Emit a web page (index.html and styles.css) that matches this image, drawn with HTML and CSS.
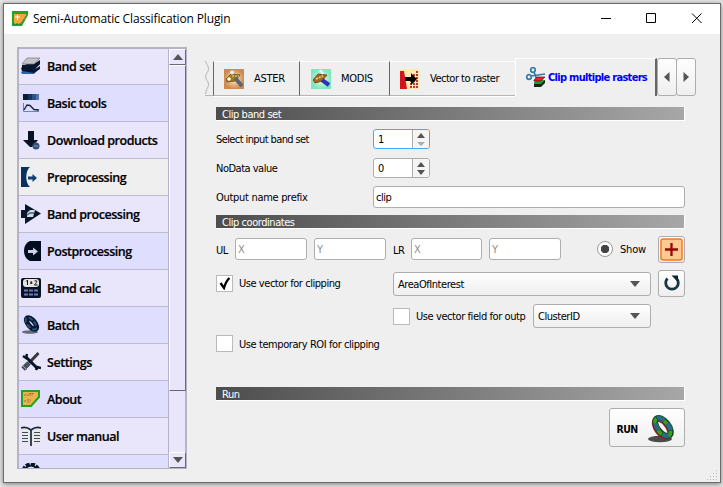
FILE: index.html
```html
<!DOCTYPE html>
<html lang="en">
<head>
<meta charset="utf-8">
<title>Semi-Automatic Classification Plugin</title>
<link rel="stylesheet" href="styles.css">
</head>
<body>
<div class="window">
  <header class="titlebar">
    <svg class="app-icon" width="16" height="16" viewBox="0 0 16 16"><path fill="#25a42b" d="M0 0h16v4l-6 11H0z"/><path fill="#f4a63c" d="M2 3h12v3l-5 7H2z"/><path d="M3 6h5M5.500 4v5" stroke="#fff"/><path d="M1 13h8l5-8" fill="none" stroke="#176c43" stroke-dasharray="2 1"/></svg>
    <h1 class="title">Semi-Automatic Classification Plugin</h1>
    <svg class="winbtns" width="102" height="12" viewBox="0 0 102 12" fill="none" stroke="#000"><path d="M0 5.500h10"/><path d="M45.500.5h9v9h-9z"/><path d="M91 .5l9.500 9.500M100.500.5L91 10"/></svg>
  </header>
  <div class="body">
    <nav class="sidebar">
      <ul class="menu">
        <li class="item"><svg width="20" height="20" viewBox="0 0 20 20"><path fill="#2d61a8" d="M0 15l6-4 13 0-6 6H1z"/><path fill="#08172e" d="M0 11l6-4h13l-6 6-12 1zM1 14l12-1 6-4v3l-6 4z"/><path fill="#08172e" d="M1 8l12-1 6-4v4l-6 5H1z"/><path fill="#c3c4c8" stroke="#777" stroke-width=".7" d="M6 1h13l-6 6H1z"/></svg><span>Band set</span></li>
        <li class="item alt"><svg width="20" height="20" viewBox="0 0 20 20"><path fill="#0c1d38" d="M2 1h5v6H2z"/><path fill="#17365e" d="M7 1h4v6H7z"/><path fill="#2b528b" d="M11 1h4v6h-4z"/><path fill="#5077b3" d="M15 1h3v6h-3z"/><path d="M2.500 10v8.500H18" fill="none" stroke="#75849a"/><path d="M3 17l3-5 3 .5 4 4 5 .5" fill="none" stroke="#17243a" stroke-width="1.400"/></svg><span>Basic tools</span></li>
        <li class="item"><svg width="20" height="20" viewBox="0 0 20 20"><path fill="#071225" d="M7 1h6v9h4l-6 7h-2L2 10h5z"/><circle cx="15" cy="16" r="3.500" fill="#31527f"/><path d="M13 16h4" stroke="#8398b5"/></svg><span>Download products</span></li>
        <li class="item current"><svg width="20" height="20" viewBox="0 0 20 20"><path fill="#08315b" d="M0 0h9C4 4 4 16 9 20H0z"/><path fill="#143f6f" d="M7 9.500h4.500V7l4.500 4-4.500 4v-2.500H7z"/></svg><span>Preprocessing</span></li>
        <li class="item"><svg width="20" height="20" viewBox="0 0 20 20"><path fill="#07162b" d="M0 6h4V0l16 9.500L4 20v-6H0z"/><path fill="#d4dae4" d="M6 9l3-3h5l-2 7H6z"/><path d="M6 11l3-2 4 0" fill="none" stroke="#426185" stroke-width="1.500"/></svg><span>Band processing</span></li>
        <li class="item alt"><svg width="20" height="20" viewBox="0 0 20 20"><path fill="#020e20" d="M20 0H9C1 3 1 17 9 20h11z"/><path fill="#ccd1e7" d="M7 9h5V6.500l5 4-5 4V12H7z"/></svg><span>Postprocessing</span></li>
        <li class="item"><svg width="20" height="20" viewBox="0 0 20 20"><rect width="20" height="20" rx="2" fill="#061325"/><rect x="2" y="1" width="16" height="8" rx="3" fill="#e6e4e1"/><path d="M5 3.500L6.500 2v5M9 5h2.500M10.200 3v3M13.500 3c3-1 3 .7 0 4h3" fill="none" stroke="#111"/><path d="M3 12.500h14M3 16.500h14" stroke="#7778bc" stroke-width="2" stroke-dasharray="4 1"/></svg><span>Band calc</span></li>
        <li class="item alt"><svg width="20" height="20" viewBox="0 0 20 20"><ellipse cx="9" cy="17" rx="8" ry="1.800" fill="#68697b"/><ellipse cx="10.500" cy="8.500" rx="3.200" ry="7" transform="rotate(-40 10.500 8.500)" fill="none" stroke="#071526" stroke-width="5"/><ellipse cx="10" cy="8.500" rx="3.500" ry="7.200" transform="rotate(-40 10 8.500)" fill="none" stroke="#24508b" stroke-width="2" stroke-dasharray="5 2"/></svg><span>Batch</span></li>
        <li class="item"><svg width="20" height="20" viewBox="0 0 20 20"><path d="M17.500 1L8 11" stroke="#3a3738" stroke-width="3"/><path d="M8 11l-6 6" stroke="#46505f" stroke-width="5"/><path d="M2 14l4 4" stroke="#a3a5b2"/><path d="M5 5l12 12" stroke="#06172b" stroke-width="3"/><path d="M2 4l3 2 1-4M15 18l1-3 4 1" fill="none" stroke="#06172b" stroke-width="2.500"/></svg><span>Settings</span></li>
        <li class="item alt"><svg width="20" height="20" viewBox="0 0 20 20"><path fill="#eab34b" stroke="#21a31e" stroke-width="2" d="M1 2h17v6l-8 9H1z"/><path d="M3 6h4M8 4.500h5M3 12h2M6 11h4" stroke="#957039" stroke-dasharray="2 .7"/><path d="M7 6h5M6 13h3" stroke="#bc8435"/></svg><span>About</span></li>
        <li class="item"><svg width="20" height="20" viewBox="0 0 20 20"><path fill="#e9e8e9" d="M0 3h20v14H0z"/><path d="M10 20V4M10 4Q5 0 0 2M10 4q5-4 10-2" fill="none" stroke="#172838" stroke-width="1.700"/><path d="M1 6.500h6M1 9.500h6M1 12.500h6M1 15.500h6M13 6.500h6M13 9.500h6M13 12.500h6M13 15.500h6" stroke="#3e4b58"/></svg><span>User manual</span></li>
        <li class="item alt"><svg width="20" height="20" viewBox="0 0 20 20"><circle cx="10" cy="9" r="7.800" fill="none" stroke="#071525" stroke-width="3.600" stroke-dasharray="4 1.200"/><circle cx="10" cy="9" r="6.500" fill="none" stroke="#071525" stroke-width="2"/></svg></li>
      </ul>
      <div class="scroll">
        <div class="sbtn"><svg width="10" height="6"><path d="M0 6l5-6 5 6z" fill="#555"/></svg></div>
        <div class="thumb"></div>
        <div class="track"></div>
        <div class="sbtn"><svg width="10" height="6"><path d="M0 0l5 6 5-6z" fill="#555"/></svg></div>
      </div>
    </nav>
    <main class="main">
      <div class="tabs">
        <svg class="torn" width="8" height="35" viewBox="0 0 8 35"><path d="M.5 0C.5 3 3.500 4 3.500 8S.5 12 .5 16s3 4 3 8-3 5-3 10" fill="none" stroke="#b3b3b3"/></svg>
        <div class="tab aster"><svg width="20" height="20" viewBox="0 0 20 20"><defs><radialGradient id="warm"><stop stop-color="#fff5c8"/><stop offset="1" stop-color="#cf884f"/></radialGradient></defs><path fill="url(#warm)" d="M0 0h20v20H0z"/><path fill="#a17c18" stroke="#7a5b28" d="M2 10l5-5 9 1-5 6-8 1z"/><circle cx="5" cy="10" r="1.800" fill="#fff"/><circle cx="8" cy="3.500" r="2" fill="#eee"/><path d="M11 9l7 8" stroke="#5d6472" stroke-width="4"/><path d="M8 7h7" stroke="#e8d39c" stroke-dasharray="2 1"/></svg><span>ASTER</span></div>
        <div class="tab modis"><svg width="20" height="20" viewBox="0 0 20 20"><defs><radialGradient id="cool"><stop stop-color="#fff8dd"/><stop offset="1" stop-color="#7ce8bf"/></radialGradient></defs><path fill="url(#cool)" d="M0 0h20v20H0z"/><path fill="#a56b1c" stroke="#744f31" d="M2 11l5-6 9 1-5 6-7 2z"/><path d="M9 1l3 4" stroke="#fff" stroke-width="2"/><path d="M5 10l7-3" stroke="#e8d39c" stroke-width="1.500" stroke-dasharray="2 1"/><path d="M11 11l7 5" stroke="#3031bd" stroke-width="4"/></svg><span>MODIS</span></div>
        <div class="tab vector"><svg width="20" height="20" viewBox="0 0 20 20"><path fill="#ffebae" d="M0 0h20v20H0z"/><path fill="#d0151c" d="M0 2h4l3 18H0z"/><path d="M11 19V8M14 19V4M17 19V1" stroke="#ba3535" stroke-width="2" stroke-dasharray="2 1"/><path d="M5 8h6V4l6 6-6 6v-4H5z"/></svg><span>Vector to raster</span></div>
        <div class="tab active"><svg width="20" height="20" viewBox="0 0 20 20"><g fill="none" stroke="#3478ae" stroke-width="1.700"><circle cx="7" cy="3" r="2.300"/><circle cx="3" cy="10" r="2.300"/><path d="M8 5l3 8M5 9l14-2"/></g><path fill="#172416" d="M8 17l4-4h7v3l-4 4H8z"/><path fill="#28963b" d="M8 15l3-2h8l-4 4H8z"/><path fill="#ef2020" stroke="#501313" stroke-width=".7" d="M8 13l3-3h8l-4 4H8z"/></svg><span>Clip multiple rasters</span></div>
        <button class="arrow"><svg width="6" height="10"><path d="M5.500 0L0 5l5.500 5z"/></svg></button><button class="arrow"><svg width="6" height="10"><path d="M.5 0L6 5 .5 10z"/></svg></button>
      </div>
      <div class="form">
        <h2 class="bar"><span class="w-cbs">Clip band set</span></h2>
        <div class="row r1"><label class="lead w-sel"><span>Select input band set</span></label><div class="spin focus"><span>1</span><i><svg width="8" height="13"><path d="M0 5l4-5 4 5z" fill="#555"/><path d="M0 9h8l-4 4z" fill="#aaa"/></svg></i></div></div>
        <div class="row r2"><label class="lead w-nod"><span>NoData value</span></label><div class="spin"><span>0</span><i><svg width="8" height="13"><path d="M0 5l4-5 4 5zM0 8h8l-4 5z" fill="#555"/></svg></i></div></div>
        <div class="row r3"><label class="lead w-out"><span>Output name prefix</span></label><div class="edit wide">clip</div></div>
        <h2 class="bar b2"><span class="w-cc">Clip coordinates</span></h2>
        <div class="row r4"><span class="ul">UL</span><div class="edit ph e1">X</div><div class="edit ph e2">Y</div><span class="lr">LR</span><div class="edit ph e3">X</div><div class="edit ph e4">Y</div><span class="radio"></span><span class="show">Show</span><button class="tool"><svg width="23" height="23" viewBox="0 0 23 23"><rect x="1" y="1" width="21" height="21" rx="2" fill="#ffc991" stroke="#ff741b" stroke-width="1.500"/><path d="M5 11.500h13M11.500 5v13" stroke="#980709" stroke-width="2.300"/></svg></button></div>
        <div class="row r5"><span class="check"><svg width="12" height="13" viewBox="0 0 12 13"><path d="M1.500 6l3.500 5Q7 4 10.500 1" fill="none" stroke="#000" stroke-width="2.300"/></svg></span><span class="c-label w-uvc">Use vector for clipping</span><div class="combo c1"><span class="w-aoi">AreaOfInterest</span><svg width="10" height="6"><path d="M0 0h10L5 6z" fill="#555"/></svg></div><button class="tool"><svg width="18" height="19" viewBox="0 0 18 19"><path d="M4.500 4.500A6.300 6.300 0 1 0 13.500 4.500" fill="none" stroke="#183743" stroke-width="2.800"/><path fill="#092631" d="M8.500 1.500H15v6.500z"/></svg></button></div>
        <div class="row r6"><span class="check"></span><span class="c-label w-uvf">Use vector field for outp</span><div class="combo c2"><span class="w-cid">ClusterID</span><svg width="10" height="6"><path d="M0 0h10L5 6z" fill="#555"/></svg></div></div>
        <div class="row r7"><span class="check"></span><span class="c-label w-roi">Use temporary ROI for clipping</span></div>
        <h2 class="bar b3"><span>Run</span></h2>
        <button class="run"><span>RUN</span><svg width="30" height="30" viewBox="0 0 30 30"><ellipse cx="13" cy="26" rx="12" ry="3.300" fill="#4b4b4b"/><g fill="none" transform="rotate(-38 16 14)"><ellipse cx="14.500" cy="14.500" rx="5.500" ry="10.500" stroke="#b81424" stroke-width="5"/><ellipse cx="16" cy="14" rx="5.500" ry="10.500" stroke="#174927" stroke-width="6"/><ellipse cx="16" cy="14" rx="5.500" ry="10.500" stroke="#2c6a82" stroke-width="4.500" stroke-dasharray="7.500 5.500"/><ellipse cx="15.500" cy="14" rx="5.500" ry="10.500" stroke="#37a31b" stroke-width="3.500" stroke-dasharray="5 8" stroke-dashoffset="-7.800"/></g></svg></button>
      </div>
    </main>
  </div>
  <svg class="grip" width="11" height="11" fill="#b9b9b9"><path d="M9 0h1v1H9zM6 3h1v1H6zM9 3h1v1H9zM3 6h1v1H3zM6 6h1v1H6zM9 6h1v1H9zM0 9h1v1H0zM3 9h1v1H3zM6 9h1v1H6zM9 9h1v1H9z"/></svg>
</div>
</body>
</html>
```
FILE: styles.css
```css
* { box-sizing: border-box; }
html, body { margin: 0; width: 723px; height: 487px; overflow: hidden; }
body { padding: 3px; background: #e6e6e6; font: 11px/14px "DejaVu Sans Condensed", "DejaVu Sans", sans-serif; font-stretch: condensed; color: #000; letter-spacing: -.45px; }
svg { display: block; flex: none; }
.window { position: relative; width: 718px; height: 480px; border: 1px solid #6d6d6d; background: #efefef; box-shadow: 0 1px 5px #777; }
.titlebar { display: flex; height: 30px; align-items: center; background: #fff; padding-left: 8px; }
.title { flex: 1; margin: 0 0 0 5px; font: 12px/18px "Open Sans", sans-serif; letter-spacing: -.14px; white-space: nowrap; }
.winbtns { margin: 0 17px 0 0; }
.body { display: flex; height: 448px; }
.sidebar { display: flex; width: 170px; height: 422px; margin: 13px 0 0 13px; border: 2px solid #b5b3c5; border-right-width: 1px; border-bottom-width: 1px; background: #e9e6fb; }
.menu { width: 150px; height: 419px; margin: 0; padding: 0; overflow: hidden; list-style: none; border-right: 1px solid #b5b3c5; }
.item { display: flex; align-items: center; height: 37px; padding-left: 2px; border-bottom: 1px solid #bdbbce; background: #e9e6fb; font: 600 12.5px/18px "Open Sans", sans-serif; letter-spacing: -.45px; white-space: nowrap; -webkit-text-stroke: .2px #000; }
.item:first-child { height: 36px; }
.item span { margin-left: 6px; padding-top: 1px; }
.alt { background: #e0deff; }
.current { background: #efefef; }
.scroll { display: flex; flex-direction: column; width: 17px; }
.sbtn, .thumb { border: 1px solid #fff; border-right: 1px solid #6b6a72; border-bottom: 1px solid #6b6a72; background: #e9e6fb; }
.sbtn { display: flex; height: 16px; align-items: center; justify-content: center; }
.thumb { height: 326px; }
.track { flex: 1; border-right: 1px solid #b5b3c5; }
.main { width: 492px; margin: 24px 0 0 18px; }
.tabs { display: flex; height: 38px; align-items: flex-end; }
.torn { width: 8px; height: 35px; border-bottom: 1px solid #bbb; }
.tab { display: flex; height: 35px; align-items: center; border-top: 1px solid #fff; border-bottom: 1px solid #b5b5b5; box-shadow: 0 1px #fff; white-space: nowrap; letter-spacing: -.25px; }
.tab span { margin-left: 10px; }
.aster { width: 86px; padding-left: 10px; border-left: 1px solid #666; }
.modis { width: 90px; padding-left: 11px; border-left: 1px solid #666; }
.vector { width: 126px; padding-left: 10px; border-left: 1px solid #666; letter-spacing: -.5px; }
.active { width: 142px; height: 38px; padding: 0 0 1px 10px; border-color: #fff; border-left: 1px solid #fff; border-right: 2px solid #666; border-bottom: 0; box-shadow: none; color: #00f; font-weight: bold; letter-spacing: -.7px; }
.active span { margin-left: 2px; padding-top: 2px; }
button { font: inherit; color: inherit; letter-spacing: inherit; border: 1px solid #adadad; border-radius: 3px; background: linear-gradient(#fefefe, #efefef); padding: 0; display: flex; align-items: center; justify-content: center; flex: none; }
.arrow { width: 20px; height: 38px; margin-right: -1px; fill: #555; }
.form { padding-left: 11px; margin-top: 11px; width: 480px; }
.bar { width: 469px; height: 14px; margin: 0; padding-left: 6px; border-right: 1px solid #fff; border-bottom: 1px solid #fff; background: linear-gradient(90deg, #4d4d4d, #a7a7a7); color: #fff; font: inherit; line-height: 16px; }
.row { display: flex; align-items: center; white-space: nowrap; }
.lead { width: 157px; padding-top: 2px; }
.w-sel { letter-spacing: -.6px; }
.w-nod { letter-spacing: -.5px; }
.w-out { letter-spacing: -.3px; }
.r1 { height: 20px; margin-top: 8px; }
.r2 { height: 20px; margin-top: 9px; }
.r3 { height: 22px; margin-top: 8px; }
.spin { display: flex; width: 57px; height: 20px; border: 1px solid #adadad; border-radius: 3px; background: #fff; line-height: 20px; overflow: hidden; }
.spin span { width: 38px; padding-left: 4px; }
.spin i { display: flex; flex: 1; align-items: center; justify-content: center; border-left: 1px solid #adadad; background: #f5f5f5; }
.focus { border-color: #43a9f5; }
.edit { height: 22px; padding-left: 2px; border: 1px solid #adadad; border-radius: 3px; background: #fff; line-height: 22px; }
.wide { width: 312px; }
.b2 { margin-top: 7px; }
.r4 { height: 28px; margin-top: 6px; }
.ul { width: 19px; padding-top: 3px; }
.ph { color: #8d8d8d; }
.e1, .e2 { width: 72px; margin-right: 7px; }
.lr { width: 18px; padding-top: 3px; }
.e3 { width: 71px; margin-right: 7px; }
.e4 { width: 72px; margin-right: 36px; }
.radio { width: 16px; height: 16px; border: 1px solid #999; border-radius: 50%; background: radial-gradient(circle, #444 0 4px, #fff 4.500px); }
.show { width: 38px; margin-left: 7px; padding-top: 2px; letter-spacing: -.2px; }
.tool { width: 27px; height: 27px; }
.r5 { height: 27px; margin-top: 7px; }
.check { display: flex; width: 17px; height: 17px; align-items: center; justify-content: center; border: 1px solid #bababa; background: #fff; flex: none; }
.c-label { margin-left: 6px; padding-top: 1px; }
.combo { display: flex; height: 24px; align-items: center; justify-content: space-between; padding: 0 10px 0 4px; border: 1px solid #adadad; border-radius: 3px; background: linear-gradient(#fefefe, #efefef); }
.combo span { padding-top: 2px; }
.w-uvc { width: 154px; }
.c1 { width: 258px; margin-right: 7px; }
.r6 { height: 24px; margin: 7px 0 0 177px; }
.w-uvf { width: 117px; letter-spacing: -.42px; }
.c2 { width: 118px; }
.r7 { height: 17px; margin-top: 7px; }
.w-roi { padding-top: 2px; letter-spacing: -.42px; }
.b3 { margin-top: 35px; }
.run { width: 76px; height: 39px; margin: 7px 0 0 393px; gap: 10px; font-weight: bold; font-size: 10.5px; letter-spacing: -.7px; }
.run span { padding-top: 2px; }
.grip { position: absolute; right: 2px; bottom: 1px; }
```
